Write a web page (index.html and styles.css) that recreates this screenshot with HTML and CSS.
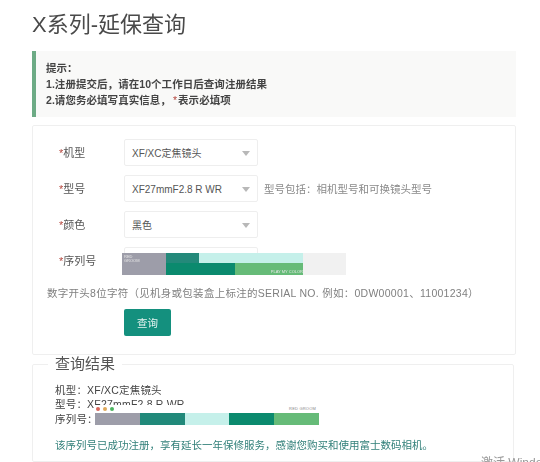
FILE: index.html
```html
<!DOCTYPE html>
<html lang="zh-CN">
<head>
<meta charset="utf-8">
<title>X系列-延保查询</title>
<link rel="stylesheet" href="styles.css">
</head>
<body>
<main class="page">
  <h1 class="title">X系列-延保查询</h1>
  <section class="notice">
    <p>提示：</p>
    <p>1.注册提交后，请在10个工作日后查询注册结果</p>
    <p>2.请您务必填写真实信息，<span class="star">*</span>表示必填项</p>
  </section>
  <form class="card">
    <div class="row">
      <label class="label"><span class="star">*</span>机型</label>
      <div class="select">XF/XC定焦镜头<i class="caret"></i></div>
    </div>
    <div class="row">
      <label class="label"><span class="star">*</span>型号</label>
      <div class="select">XF27mmF2.8 R WR<i class="caret"></i></div>
      <span class="hint">型号包括：相机型号和可换镜头型号</span>
    </div>
    <div class="row">
      <label class="label"><span class="star">*</span>颜色</label>
      <div class="select">黑色<i class="caret"></i></div>
    </div>
    <div class="row serial-row">
      <label class="label"><span class="star">*</span>序列号</label>
      <div class="select"></div>
      <div class="mask-a" aria-hidden="true">
        <div class="a-grey"><span class="tiny">RED<br>GROOM</span></div>
        <div class="a-teal"></div>
        <div class="a-light"></div>
        <div class="a-dark"></div>
        <div class="a-green"><span class="tiny">PLAY MY COLOR</span></div>
        <div class="a-rest"></div>
      </div>
    </div>
    <p class="help">数字开头8位字符（见机身或包装盒上标注的SERIAL NO. 例如：0DW00001、11001234）</p>
    <button class="btn" type="button">查询</button>
  </form>
  <fieldset class="result">
    <legend class="legend">查询结果</legend>
    <p class="line">机型：XF/XC定焦镜头</p>
    <p class="line">型号：XF27mmF2.8 R WR</p>
    <div class="line serial-line">序列号：
      <div class="mask-b" aria-hidden="true">
        <div class="b-top">
          <span class="dots"><i class="dot red"></i><i class="dot amber"></i><i class="dot lime"></i></span>
          <span class="tiny">RED GROOM</span>
        </div>
        <div class="b-bar">
          <i class="b1"></i><i class="b2"></i><i class="b3"></i><i class="b4"></i><i class="b5"></i>
        </div>
      </div>
    </div>
    <p class="ok">该序列号已成功注册，享有延长一年保修服务，感谢您购买和使用富士数码相机。</p>
  </fieldset>
</main>
<div class="watermark">激活 Windows</div>
</body>
</html>
```
FILE: styles.css
```css
* { box-sizing: border-box; }
html, body { margin: 0; padding: 0; }
body {
  width: 540px;
  height: 462px;
  overflow: hidden;
  position: relative;
  background: #fff;
  color: #444;
  font-family: "Liberation Sans", "Noto Sans CJK SC", sans-serif;
  font-size: 10.5px;
}
.page { padding: 10px 24px 0 32px; filter: blur(0.35px); }
p { margin: 0; }
.title {
  margin: 0;
  height: 41px;
  font-size: 22px;
  line-height: 29px;
  font-weight: 400;
  color: #4a4a4a;
}
.notice {
  height: 66px;
  padding: 9px 0 0 10px;
  background: #f9f9f8;
  border-left: 4px solid #6dab85;
  font-size: 10.5px;
  line-height: 16px;
  font-weight: 700;
  letter-spacing: 0.05px;
  color: #444;
}
.star { color: #b5483f; font-weight: 400; }
.notice .star { margin: 0 1px 0 2px; }
.card {
  margin-top: 8px;
  height: 230px;
  padding: 13px 0 0 14px;
  border: 1px solid #efefef;
  border-radius: 2px;
}
.row { display: flex; align-items: center; height: 27px; margin-bottom: 9px; position: relative; }
.label { width: 77px; padding-left: 12px; font-size: 11px; line-height: 14px; color: #555; }
.select {
  position: relative;
  width: 134px;
  height: 27px;
  padding-left: 7px;
  line-height: 27px;
  font-size: 10px;
  color: #555;
  background: #fff;
  border: 1px solid #eee;
  border-radius: 2px;
}
.caret {
  position: absolute;
  right: 7px;
  top: 11px;
  border: 4px solid transparent;
  border-top: 5px solid #b8b8b8;
  border-bottom: 0;
}
.hint { margin-left: 6px; color: #8a8a8a; font-size: 10.5px; }
.mask-a {
  position: absolute;
  left: 75px;
  top: 6px;
  width: 224px;
  height: 22px;
  display: grid;
  grid-template-columns: 44px 33px 36px 68px 43px;
  grid-template-rows: 10px 12px;
}
.mask-a div { position: relative; }
.a-grey { grid-row: 1 / 3; grid-column: 1; background: #9d9da9; }
.a-teal { grid-row: 1; grid-column: 2; background: #24897a; }
.a-light { grid-row: 1; grid-column: 3 / 5; background: #c5f0ea; }
.a-dark { grid-row: 2; grid-column: 2 / 4; background: #0b8a6e; }
.a-green { grid-row: 2; grid-column: 4; background: #66bb78; }
.a-rest { grid-row: 1 / 3; grid-column: 5; background: #f1f1f1; }
.tiny { font-size: 4px; line-height: 4px; color: #e8e8e8; white-space: nowrap; display: block; }
.a-grey .tiny { padding: 2px 0 0 2px; }
.a-green .tiny { position: absolute; right: 0; bottom: 1px; }
.help {
  margin-top: 11px;
  height: 17px;
  line-height: 17px;
  color: #808080;
  font-size: 10.5px;
  letter-spacing: 0.27px;
  white-space: nowrap;
}
.btn {
  display: block;
  margin: 7px 0 0 77px;
  width: 47px;
  height: 27px;
  padding: 0;
  border: 0;
  border-radius: 2px;
  background: #14907e;
  color: #e6f3f0;
  font: inherit;
}
.result {
  margin: 1px 0 0;
  padding: 11px 0 0 22px;
  width: 482px;
  height: 106px;
  border: 1px solid #efefef;
  border-radius: 2px;
  min-width: 0;
}
.legend { margin-left: -7px; padding: 0 7px; font-size: 15px; line-height: 16px; color: #555; }
.line { height: 14px; line-height: 14px; font-size: 10.5px; color: #444; letter-spacing: 0.2px; }
.serial-line { position: relative; margin-top: 1px; }
.mask-b { position: absolute; left: 40px; top: -7px; width: 224px; display: flex; flex-direction: column; background: #fff; }
.b-top { display: flex; align-items: center; justify-content: space-between; height: 8px; padding: 0 3px 0 0; }
.b-top .tiny { color: #888; }
.dots { display: flex; gap: 3px; padding-left: 1px; }
.dot { display: block; width: 4px; height: 4px; border-radius: 50%; }
.red { background: #d9655a; }
.amber { background: #e0a95a; }
.lime { background: #4cb45f; }
.b-bar { display: flex; height: 12px; }
.b-bar i { display: block; flex: 1; }
.b1 { background: #9d9da9; }
.b2 { background: #21897a; }
.b3 { background: #c5f0ea; }
.b4 { background: #0b8a6e; }
.b5 { background: #66bb78; }
.ok { margin-top: 12px; line-height: 14px; color: #32807a; white-space: nowrap; }
.watermark {
  position: absolute;
  left: 481px;
  top: 456px;
  font-size: 12px;
  line-height: 14px;
  color: #999;
  white-space: nowrap;
}
```
